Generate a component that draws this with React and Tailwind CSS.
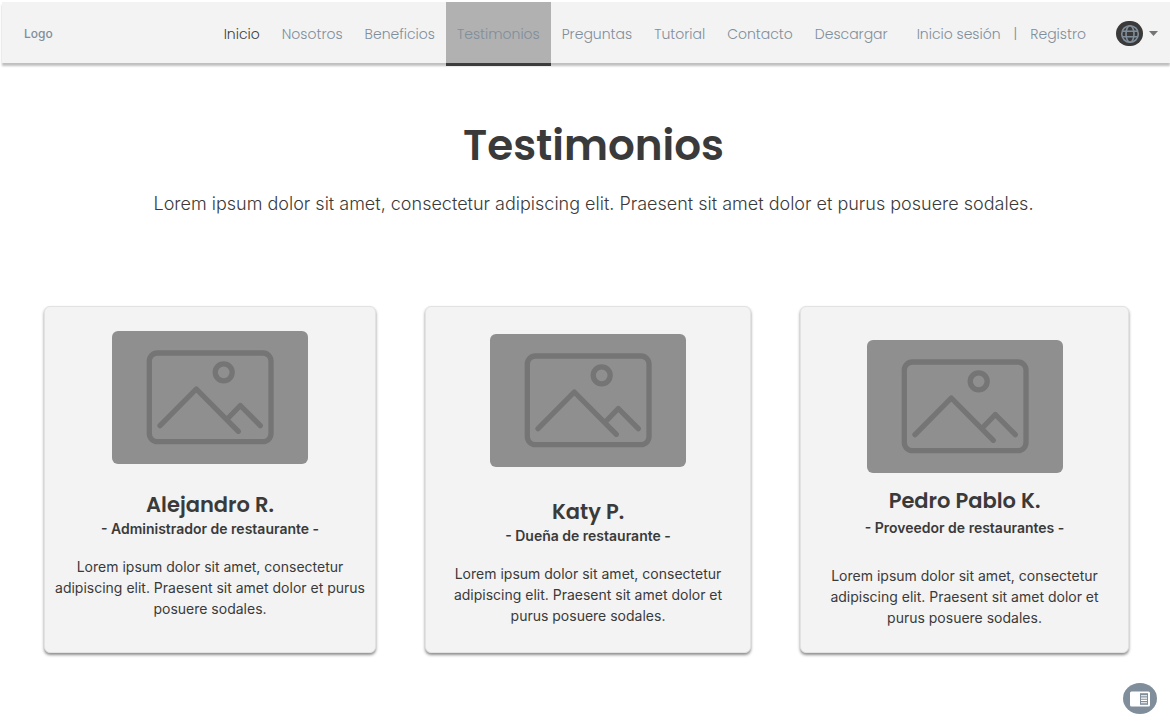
const NAV_ITEMS = [
  { label: 'Inicio', tone: 'home' },
  { label: 'Nosotros' },
  { label: 'Beneficios' },
  { label: 'Testimonios', tone: 'current' },
  { label: 'Preguntas' },
  { label: 'Tutorial' },
  { label: 'Contacto' },
  { label: 'Descargar' },
];

const LOREM =
  'Lorem ipsum dolor sit amet, consectetur adipiscing elit. Praesent sit amet dolor et purus posuere sodales.';

const TESTIMONIALS = [
  {
    name: 'Alejandro R.',
    role: '- Administrador de restaurante -',
    card: 'px-2 pt-6',
    nameGap: 'mt-[27px]',
    roleGap: 'mt-0',
    textGap: 'mt-[17px]',
  },
  {
    name: 'Katy P.',
    role: '- Dueña de restaurante -',
    card: 'px-6 pt-[27px]',
    nameGap: 'mt-[31px]',
    roleGap: 'mt-0',
    textGap: 'mt-[17px]',
  },
  {
    name: 'Pedro Pablo K.',
    role: '- Proveedor de restaurantes -',
    card: 'px-6 pt-[33px]',
    nameGap: 'mt-[14px]',
    roleGap: 'mt-[3px]',
    textGap: 'mt-[27px]',
  },
];

const TONES = {
  home: 'text-[#3a3a3a]',
  current: 'bg-[#b1b1b1] text-[#808e9b] shadow-[0_3px_0_#3c3c3c]',
  plain: 'text-[#808e9b]',
};

function GlobeIcon() {
  return (
    <svg viewBox="0 0 20 20" className="size-5" fill="none" stroke="#808e9b" strokeWidth="1.6" aria-hidden="true">
      <circle cx="10" cy="10" r="8.3" />
      <ellipse cx="10" cy="10" rx="4" ry="8.3" />
      <path d="M2.5 7.2h15M2.5 12.8h15" />
    </svg>
  );
}

function PicturePlaceholder() {
  return (
    <svg
      viewBox="0 0 196 133"
      className="h-[133px] w-[196px] shrink-0 rounded-md bg-[#8f8f8f]"
      fill="none"
      stroke="#757575"
      strokeWidth="5.3"
      strokeLinecap="round"
      strokeLinejoin="round"
      aria-hidden="true"
    >
      <rect x="37.3" y="22" width="121.7" height="88.6" rx="8" />
      <circle cx="111.7" cy="41.3" r="8.5" />
      <path d="M48 94.6 84.3 58l42 42.3M115.3 88l13-13.5 20 20.1" />
    </svg>
  );
}

function Header() {
  return (
    <header className="mt-0.5 ml-0.5 flex h-[61px] items-center bg-[#f3f3f3] pr-3 pl-[22px] font-['Poppins','Inter',sans-serif] text-sm font-light text-[#808e9b] shadow-[0_3px_2px_rgba(0,0,0,0.25)]">
      <a href="#inicio" className="pt-0.5 font-['Inter',sans-serif] text-xs font-medium">
        Logo
      </a>
      <nav className="ml-auto flex h-full">
        {NAV_ITEMS.map(({ label, tone }) => (
          <a
            key={label}
            href={'#' + label.toLowerCase()}
            aria-current={tone === 'current' ? 'page' : undefined}
            className={`flex h-full items-center px-[11px] pt-0.5 ${TONES[tone || 'plain']}`}
          >
            {label}
          </a>
        ))}
      </nav>
      <div className="ml-[18px] flex items-center gap-[13px] pt-0.5">
        <a href="#sesion">Inicio sesión</a>
        <span>|</span>
        <a href="#registro">Registro</a>
      </div>
      <button type="button" aria-label="Idioma" className="ml-[30px] flex items-center gap-1.5 pt-0.5">
        <span className="flex h-[25px] w-[27px] items-center justify-center rounded-full bg-[#3a3a3a]">
          <GlobeIcon />
        </span>
        <svg viewBox="0 0 9 5" className="h-[5px] w-[9px]" fill="#757575" aria-hidden="true">
          <path d="M0 0h9L4.5 5z" />
        </svg>
      </button>
    </header>
  );
}

function TestimonialCard({ person }) {
  return (
    <article
      className={`flex flex-col items-center rounded-md border border-[#e2e2e2] bg-[#f3f3f3] pb-6 text-center shadow-[0_2px_3px_rgba(0,0,0,0.45)] ${person.card}`}
    >
      <PicturePlaceholder />
      <h2 className={`font-['Poppins','Inter',sans-serif] text-[21px] leading-7 font-semibold ${person.nameGap}`}>
        {person.name}
      </h2>
      <p className={`text-sm leading-5 font-semibold ${person.roleGap}`}>{person.role}</p>
      <p className={`text-sm leading-[21px] ${person.textGap}`}>{LOREM}</p>
    </article>
  );
}

export default function App() {
  return (
    <div className="min-h-screen bg-white font-['Inter',sans-serif] text-[#3a3a3a]">
      <div className="flow-root">
        <Header />
      </div>
      <main className="pb-[72px]">
        <section className="pt-[59px] pl-[17px] text-center">
          <h1 className="font-['Poppins','Inter',sans-serif] text-[42px] leading-[48px] font-semibold">Testimonios</h1>
          <p className="mt-5 text-lg leading-7 font-light">{LOREM}</p>
        </section>
        <section className="mt-[88px] grid grid-cols-[332fr_326fr_329fr] gap-[49px] pr-[41px] pl-11">
          {TESTIMONIALS.map((person) => (
            <TestimonialCard key={person.name} person={person} />
          ))}
        </section>
      </main>
      <button
        type="button"
        aria-label="Abrir panel"
        className="fixed right-[13px] bottom-[13px] flex h-[31px] w-[34px] items-center justify-center rounded-[50%] bg-[#808e9b]"
      >
        <svg viewBox="0 0 20 16" className="h-4 w-5" aria-hidden="true">
          <rect x="0" y="0.5" width="20" height="15" rx="1.5" fill="#fff" />
          <path d="M10 2.2h8v11.6h-8z" fill="#808e9b" />
          <path d="M11 4.8h6M11 7.1h6M11 9.4h6M11 11.7h6" stroke="#fff" strokeWidth="1.1" />
        </svg>
      </button>
    </div>
  );
}
